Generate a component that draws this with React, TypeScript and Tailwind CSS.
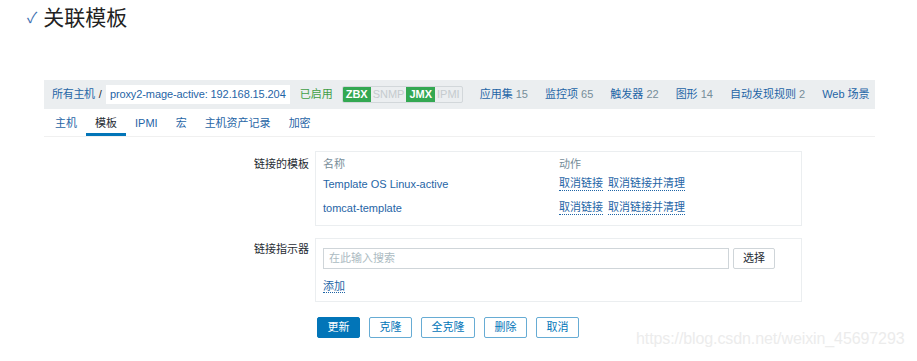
import React from 'react';

const font = { fontFamily: '"Liberation Sans", Arial, "Noto Sans CJK SC", sans-serif' };

const navItems = [
  { label: '应用集', count: 15 },
  { label: '监控项', count: 65 },
  { label: '触发器', count: 22 },
  { label: '图形', count: 14 },
  { label: '自动发现规则', count: 2 },
  { label: 'Web 场景' },
];

const tabs = ['主机', '模板', 'IPMI', '宏', '主机资产记录', '加密'];

const templates = ['Template OS Linux-active', 'tomcat-template'];

const DotLink = ({ children }: { children: React.ReactNode }) => (
  <span className="text-[#1f65a6] border-b border-dotted border-[#1f65a6] leading-[13px]">{children}</span>
);

export default function App() {
  return (
    <div className="w-[917px] h-[361px] bg-white relative overflow-hidden text-[11px] text-[#1f2c33]" style={font}>
      {/* title */}
      <div className="flex items-center h-[36px] pl-[27px] pt-[1px]">
        <span className="text-[#3c6fb0] text-[15px] mr-[6px]">✓</span>
        <span
          className="text-[21px] text-[#222]"
          style={{ fontFamily: '"Liberation Serif", "Noto Sans CJK SC", serif' }}
        >
          关联模板
        </span>
      </div>

      <div className="ml-[44px] w-[831px] mt-[44px]">
        {/* breadcrumb bar */}
        <div className="h-[29px] bg-[#ebeef0] flex items-center pl-[8px] whitespace-nowrap overflow-hidden">
          <span className="text-[#1f65a6] shrink-0 tracking-[-0.3px]">所有主机</span>
          <span className="mx-[4px] text-[#1f2c33]">/</span>
          <span className="bg-white h-[19px] flex items-center px-[4px] text-[#1f65a6] shrink-0 tracking-[-0.1px]">
            proxy2-mage-active: 192.168.15.204
          </span>
          <span className="ml-[10px] text-[#429e47] shrink-0">已启用</span>
          <span className="ml-[9px] flex shrink-0 border border-[#d2d7da] rounded-[2px] h-[17px] text-[11px] font-bold overflow-hidden">
            <span className="bg-[#33a852] text-white px-[3px] flex items-center">ZBX</span>
            <span className="text-[#c5cbce] px-[2px] flex items-center font-normal">SNMP</span>
            <span className="bg-[#33a852] text-white px-[3px] flex items-center">JMX</span>
            <span className="text-[#c5cbce] px-[2px] flex items-center font-normal">IPMI</span>
          </span>
          <div className="flex ml-[17px] gap-[17px] shrink-0">
            {navItems.map((n) => (
              <span key={n.label}>
                <span className="text-[#1f65a6]">{n.label}</span>
                {n.count !== undefined && <span className="text-[#768d99]"> {n.count}</span>}
              </span>
            ))}
          </div>
        </div>

        {/* tabs */}
        <div className="h-[28px] flex items-stretch pl-[11px] gap-[18px] border-b border-[#f0f0f0]">
          {tabs.map((t) => (
            <span
              key={t}
              className={
                t === '模板'
                  ? 'flex items-center text-[#1f2c33] border-b-[3px] border-[#0275b8] px-[9px] -mx-[9px] pt-[5px]'
                  : 'flex items-center text-[#1f65a6] pt-[2px]'
              }
            >
              {t}
            </span>
          ))}
        </div>

        {/* form */}
        <div className="mt-[14px] grid grid-cols-[265px_487px] gap-x-[6px]">
          <div className="text-right pt-[5px]">链接的模板</div>
          <div className="border border-[#ebeef0] px-[7px] pt-[4px] pb-[5px]">
            <div className="grid grid-cols-[236px_1fr]">
              <span className="text-[#768d99] h-[16px]">名称</span>
              <span className="text-[#768d99] h-[16px]">动作</span>
              {templates.map((t) => (
                <React.Fragment key={t}>
                  <span className="text-[#1f65a6] h-[24px] flex items-center">{t}</span>
                  <span className="h-[24px] flex items-center gap-[5px]">
                    <DotLink>取消链接</DotLink>
                    <DotLink>取消链接并清理</DotLink>
                  </span>
                </React.Fragment>
              ))}
            </div>
          </div>

          <div className="text-right pt-[3px] mt-[12px]">链接指示器</div>
          <div className="border border-[#ebeef0] px-[7px] pt-[9px] pb-[7px] mt-[12px]">
            <div className="flex items-center gap-[4px]">
              <div className="w-[406px] h-[21px] border border-[#cfd5d9] flex items-center px-[5px] text-[#acbbc2]">
                在此输入搜索
              </div>
              <div className="w-[42px] h-[21px] border border-[#cfd5d9] rounded-[2px] flex items-center justify-center text-[#1f2c33]">
                选择
              </div>
            </div>
            <div className="mt-[9px] h-[16px]">
              <DotLink>添加</DotLink>
            </div>
          </div>

          <div />
          <div className="mt-[15px] flex gap-[9px] h-[21px] ml-[2px]">
            <span className="w-[43px] bg-[#0275b8] text-white rounded-[2px] flex items-center justify-center border border-[#0275b8]">更新</span>
            <span className="w-[43px] border border-[#0275b8]/60 text-[#0275b8] rounded-[2px] flex items-center justify-center">克隆</span>
            <span className="w-[54px] border border-[#0275b8]/60 text-[#0275b8] rounded-[2px] flex items-center justify-center">全克隆</span>
            <span className="w-[43px] border border-[#0275b8]/60 text-[#0275b8] rounded-[2px] flex items-center justify-center">删除</span>
            <span className="w-[43px] border border-[#0275b8]/60 text-[#0275b8] rounded-[2px] flex items-center justify-center">取消</span>
          </div>
        </div>
      </div>

      <div className="absolute left-[636px] top-[327px] text-[16px] text-[#ececec] tracking-[-0.1px]">
        https://blog.csdn.net/weixin_45697293
      </div>
    </div>
  );
}
